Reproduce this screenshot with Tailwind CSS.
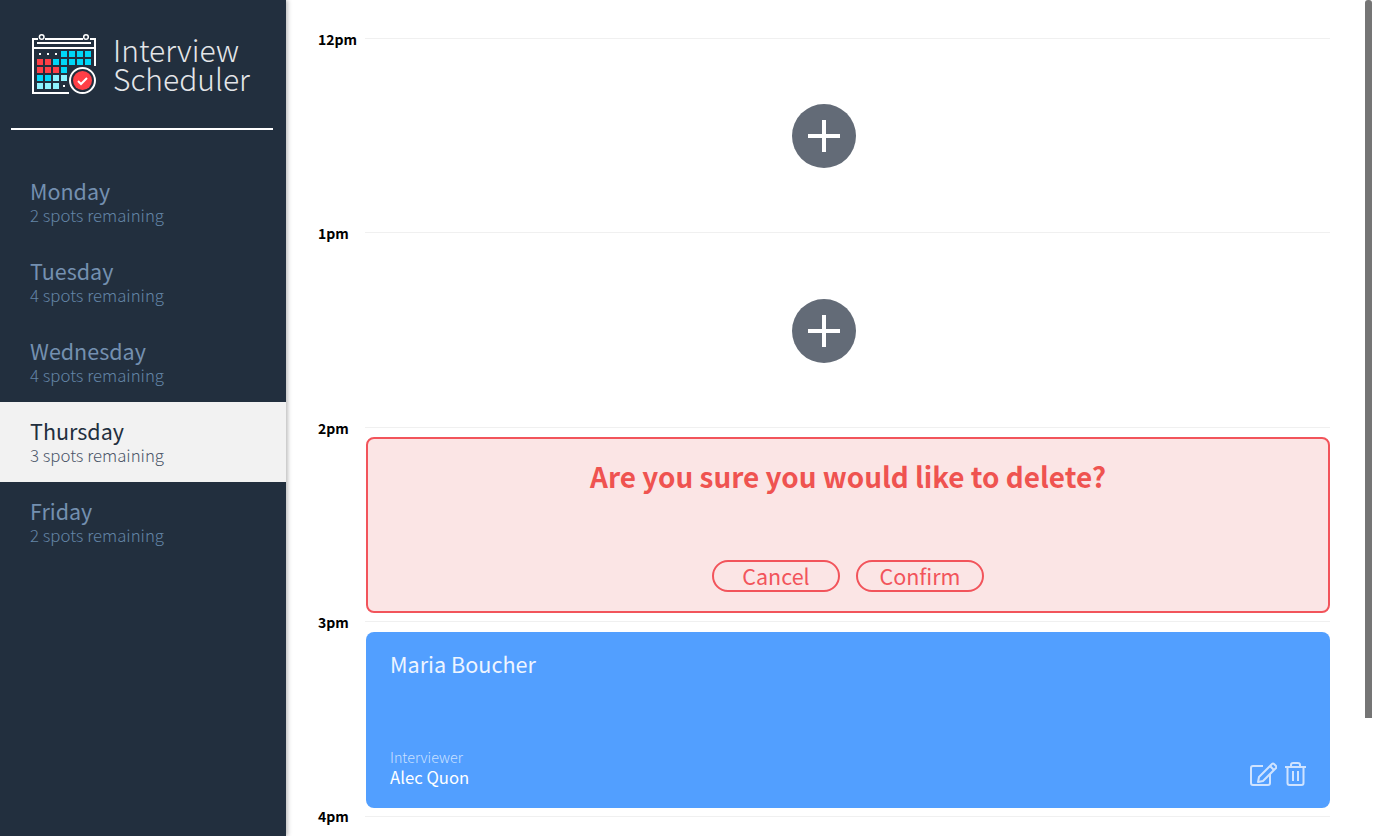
<!DOCTYPE html>
<html lang="en">
<head>
  <meta charset="UTF-8" />
  <title>Interview Scheduler</title>
  <script src="https://cdn.jsdelivr.net/npm/@tailwindcss/browser@4"></script>
</head>
<body class="relative flex h-[836px] overflow-hidden bg-white font-['Noto_Sans_CJK_SC','Source_Sans_Pro','Lato',sans-serif]">

  <!-- Sidebar -->
  <nav class="z-10 flex w-[286px] shrink-0 flex-col bg-[#222f3e] shadow-[2px_0_4px_rgba(0,0,0,0.25)]">
    <div class="flex h-[128px] items-start pl-[32px] pt-[33px]">
      <svg width="66" height="62" viewBox="32 33 66 62" class="shrink-0">
        <g fill="none" stroke="#fff" stroke-width="2">
          <path d="M69 93H33V39H38M45 39H83M90 39H95V66" />
          <path d="M37 43H91" />
          <path d="M33 48H95" />
          <circle cx="41.7" cy="37" r="2.3" stroke-width="1.5" />
          <circle cx="86" cy="37" r="2.3" stroke-width="1.5" />
        </g>
        <g fill="#fff">
          <rect x="39" y="53" width="2" height="2" />
          <rect x="47" y="53" width="2" height="2" />
          <rect x="55" y="53" width="2" height="2" />
          <rect x="63" y="85" width="2" height="2" />
        </g>
        <g fill="#00d7f7">
          <rect x="61" y="51" width="6" height="6" />
          <rect x="69" y="51" width="6" height="6" />
          <rect x="77" y="51" width="6" height="6" />
          <rect x="85" y="51" width="6" height="6" />
          <rect x="53" y="59" width="6" height="6" />
          <rect x="61" y="59" width="6" height="6" />
          <rect x="69" y="59" width="6" height="6" />
          <rect x="77" y="59" width="6" height="6" />
          <rect x="85" y="59" width="6" height="6" />
          <rect x="61" y="67" width="6" height="6" />
          <rect x="37" y="75" width="6" height="6" />
          <rect x="45" y="75" width="6" height="6" />
        </g>
        <g fill="#ff3f46">
          <rect x="37" y="59" width="6" height="6" />
          <rect x="45" y="59" width="6" height="6" />
          <rect x="37" y="67" width="6" height="6" />
          <rect x="45" y="67" width="6" height="6" />
          <rect x="53" y="67" width="6" height="6" />
        </g>
        <g fill="#8df3ff">
          <rect x="53" y="75" width="6" height="6" />
          <rect x="61" y="75" width="6" height="6" />
          <rect x="37" y="83" width="6" height="6" />
          <rect x="45" y="83" width="6" height="6" />
          <rect x="53" y="83" width="6" height="6" />
        </g>
        <circle cx="82.5" cy="80.5" r="13.5" fill="#222f3e" />
        <circle cx="82.5" cy="80.5" r="12.5" fill="none" stroke="#fff" stroke-width="2" />
        <circle cx="82.5" cy="80.5" r="9.5" fill="#ff3f46" />
        <path d="M78 81L81 84L87 78" fill="none" stroke="#fff" stroke-width="2" />
      </svg>
      <h1 class="ml-[15px] mt-[2px] text-[30px] leading-[29px] font-light text-[#e4e6e9]">Interview<br />Scheduler</h1>
    </div>
    <div class="ml-[11px] mr-[13px] h-[2px] bg-white"></div>

    <ul class="mt-[32px]">
      <li class="flex h-[80px] flex-col justify-center pl-[30px] text-[#7490b0]">
        <h2 class="text-[21.5px] leading-[26px] font-normal">Monday</h2>
        <p class="text-[16.8px] leading-[22px] font-light text-[#6485a6]">2 spots remaining</p>
      </li>
      <li class="flex h-[80px] flex-col justify-center pl-[30px] text-[#7490b0]">
        <h2 class="text-[21.5px] leading-[26px] font-normal">Tuesday</h2>
        <p class="text-[16.8px] leading-[22px] font-light text-[#6485a6]">4 spots remaining</p>
      </li>
      <li class="flex h-[80px] flex-col justify-center pl-[30px] text-[#7490b0]">
        <h2 class="text-[21.5px] leading-[26px] font-normal">Wednesday</h2>
        <p class="text-[16.8px] leading-[22px] font-light text-[#6485a6]">4 spots remaining</p>
      </li>
      <li class="flex h-[80px] flex-col justify-center bg-[#f2f2f2] pl-[30px] text-[#222f3e]">
        <h2 class="text-[21.5px] leading-[26px] font-normal">Thursday</h2>
        <p class="text-[16.8px] leading-[22px] font-light text-[#4a5568]">3 spots remaining</p>
      </li>
      <li class="flex h-[80px] flex-col justify-center pl-[30px] text-[#7490b0]">
        <h2 class="text-[21.5px] leading-[26px] font-normal">Friday</h2>
        <p class="text-[16.8px] leading-[22px] font-light text-[#6485a6]">2 spots remaining</p>
      </li>
    </ul>
  </nav>

  <!-- Schedule -->
  <main class="h-full flex-1 overflow-hidden pl-[32px] pr-[43px] pt-[38px]">
    <section class="h-[194.4px]">
      <header class="flex h-px items-center">
        <h4 class="w-[47px] translate-y-[1px] text-[14px] font-bold text-black">12pm</h4>
        <div class="h-px flex-1 bg-[#f0f0f0]"></div>
      </header>
      <button class="mt-[65px] ml-[474px] flex h-[64px] w-[64px] items-center justify-center rounded-full bg-[#636b77]">
        <svg width="32" height="32" viewBox="0 0 32 32"><path d="M16 0V32M0 16H32" stroke="#fff" stroke-width="4" /></svg>
      </button>
    </section>

    <section class="h-[194.4px]">
      <header class="flex h-px items-center">
        <h4 class="w-[47px] translate-y-[1px] text-[14px] font-bold text-black">1pm</h4>
        <div class="h-px flex-1 bg-[#f0f0f0]"></div>
      </header>
      <button class="mt-[66px] ml-[474px] flex h-[64px] w-[64px] items-center justify-center rounded-full bg-[#636b77]">
        <svg width="32" height="32" viewBox="0 0 32 32"><path d="M16 0V32M0 16H32" stroke="#fff" stroke-width="4" /></svg>
      </button>
    </section>

    <section class="h-[194.4px]">
      <header class="flex h-px items-center">
        <h4 class="w-[47px] translate-y-[1px] text-[14px] font-bold text-black">2pm</h4>
        <div class="h-px flex-1 bg-[#f0f0f0]"></div>
      </header>
      <div class="mt-[9px] ml-[48px] flex h-[176px] flex-col items-center justify-between rounded-lg border-2 border-[#f2545b] bg-[#fbe5e5] pt-[18px] pb-[19px] text-[#f2545b]">
        <h2 class="text-[27.9px] leading-[38px] font-semibold text-[#ef5350]">Are you sure you would like to delete?</h2>
        <div class="flex gap-[16px]">
          <button class="h-[32px] w-[128px] rounded-full border-2 border-[#f2545b] text-[21.5px] leading-[26px] font-normal">Cancel</button>
          <button class="h-[32px] w-[128px] rounded-full border-2 border-[#f2545b] text-[21.5px] leading-[26px] font-normal">Confirm</button>
        </div>
      </div>
    </section>

    <section class="h-[194.4px]">
      <header class="flex h-px items-center">
        <h4 class="w-[47px] translate-y-[1px] text-[14px] font-bold text-black">3pm</h4>
        <div class="h-px flex-1 bg-[#f0f0f0]"></div>
      </header>
      <div class="mt-[10px] ml-[48px] flex h-[176px] flex-col justify-between rounded-lg bg-[#529fff] px-[24px] pt-[18px] pb-[20px] text-white">
        <h2 class="text-[21.6px] leading-[28px] font-normal text-[#eef5ff]">Maria Boucher</h2>
        <div class="flex items-end justify-between">
          <div>
            <p class="text-[14.3px] leading-[20px] font-light text-white/70">Interviewer</p>
            <p class="text-[16.7px] leading-[21px] font-normal">Alec Quon</p>
          </div>
          <div class="mb-[2px] flex gap-[8px]">
            <svg width="27" height="24" viewBox="0 0 27 24" fill="none" stroke="#cfe3ff" stroke-width="2" stroke-linejoin="round">
              <path d="M13 4H3Q1 4 1 6V21Q1 23 3 23H18Q20 23 20 21V12" />
              <path d="M9 15L22 2Q23 1 24 2L26 4Q27 5 26 6L13 19L8 20Z" />
              <path d="M20 4L24 8" />
            </svg>
            <svg width="21" height="24" viewBox="0 0 21 24" fill="none" stroke="#cfe3ff" stroke-width="2" stroke-linejoin="round">
              <path d="M0 5H21" />
              <path d="M6 5V3Q6 1 8 1H13Q15 1 15 3V5" />
              <path d="M2.5 5V21Q2.5 23 4.5 23H16.5Q18.5 23 18.5 21V5" />
              <path d="M8 9V19M13 9V19" />
            </svg>
          </div>
        </div>
      </div>
    </section>

    <section>
      <header class="flex h-px items-center">
        <h4 class="w-[47px] text-[14px] font-bold text-black">4pm</h4>
        <div class="h-px flex-1 bg-[#f0f0f0]"></div>
      </header>
    </section>
  </main>

  <!-- Scrollbar thumb -->
  <div class="absolute top-0 left-[1365px] h-[718px] w-[7px] rounded-t-[3px] bg-[#757575]"></div>
</body>
</html>
